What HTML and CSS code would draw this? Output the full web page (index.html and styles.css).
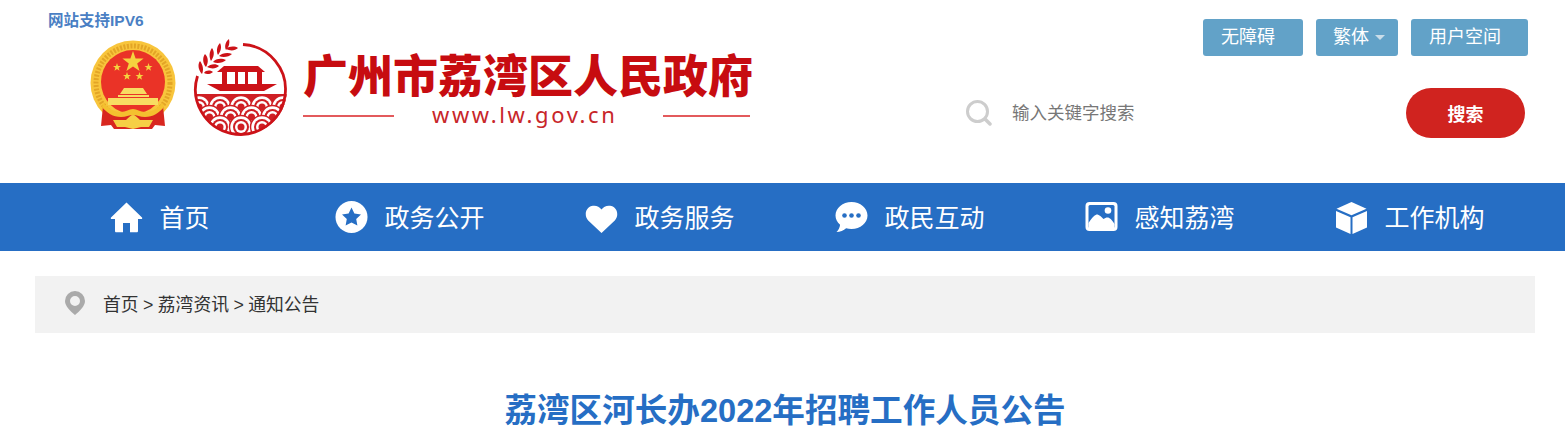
FILE: index.html
```html
<!DOCTYPE html>
<html lang="zh-CN">
<head>
  <meta charset="utf-8">
  <meta name="viewport" content="width=device-width, initial-scale=1">
  <title>荔湾区河长办2022年招聘工作人员公告</title>
  <link rel="stylesheet" href="styles.css">
</head>
<body>
  <div class="header">
    <div class="brand">
      <div class="ipv6">网站支持IPV6</div>
      <div class="logo">
        <svg class="emblem" viewBox="90 40 87 92" aria-hidden="true">
          <circle cx="133" cy="83" r="42.5" fill="#f8c53c"/>
          <circle cx="133" cy="83" r="37" fill="none" stroke="#e3a526" stroke-width="5" stroke-dasharray="2 1.500"/>
          <circle cx="133" cy="82" r="32" fill="#ea3327"/>
          <polygon points="133,51 135.600,58.600 143.600,58.600 137.200,63.400 139.600,71 133,66.400 126.400,71 128.800,63.400 122.400,58.600 130.400,58.600" fill="#f5d33f"/>
          <polygon points="117,63 118,66 121,66 118.600,67.800 119.500,70.800 117,69 114.500,70.800 115.400,67.800 113,66 116,66" fill="#f5d33f"/>
          <polygon points="148.500,63 149.500,66 152.500,66 150.100,67.800 151,70.800 148.500,69 146,70.800 146.900,67.800 144.500,66 147.500,66" fill="#f5d33f"/>
          <polygon points="127,72 128,75 131,75 128.600,76.800 129.500,79.800 127,78 124.500,79.800 125.400,76.800 123,75 126,75" fill="#f5d33f"/>
          <polygon points="139.500,72 140.500,75 143.500,75 141.100,76.800 142,79.800 139.500,78 137,79.800 137.900,76.800 135.500,75 138.500,75" fill="#f5d33f"/>
          <path d="M124 88h19l4 6h-27zM118 95h31v2h-31zM108 98h50v7h-50z" fill="#f8dc62"/>
          <path d="M103 106c5 3 10 9 17 9 5 0 8-3 13-3s8 3 13 3c7 0 12-6 17-9l2 20-10-1-3 4h-38l-3-4-10 1z" fill="#d8261f"/>
          <path d="M103 103c6 5 10 9 18 9 5 0 8-3 12-3s7 3 12 3c8 0 12-4 18-9l1 4c-5 6-11 10-19 10-5 0-8-2-12-2s-7 2-12 2c-8 0-14-4-19-10z" fill="#f4c02f"/>
          <path d="M113 120h13c3-3 5-5 7-5s4 2 7 5h13l-4 7h-8l-8 2-8-2h-8z" fill="#f6cf45"/>
        </svg>
        <svg class="seal" viewBox="193 37 96 98" aria-hidden="true">
          <defs>
            <clipPath id="sealClip"><circle cx="241.500" cy="88" r="45.500"/></clipPath>
            <g id="scallop">
              <circle r="11.500" fill="#fff" stroke="#cf1f24" stroke-width="1.500"/>
              <circle r="8" fill="#cf1f24"/>
              <circle r="6" fill="#fff"/>
              <circle r="3.500" fill="#cf1f24"/>
            </g>
          </defs>
          <g fill="#cc1218">
            <path d="M200 60c3 4 4 9 2 13-3-3-5-9-2-13zM205 53c3 3 4 8 1 13-3-3-4-9-1-13zM212 47c3 4 2 9-1 13-2-4-2-9 1-13zM220 42c2 4 1 8-2 12-2-4-1-9 2-12zM229 38c1 4 0 8-3 11-2-4 0-9 3-11z"/>
            <path d="M238 47c-3 3-8 3-12 1 3-3 9-3 12-1zM232 53c-3 3-9 4-13 2 3-3 9-4 13-2zM226 59c-3 3-9 4-13 2 3-4 9-4 13-2zM219 65c-3 3-8 3-12 1 3-3 9-4 12-1zM213 71c-2 2-6 3-9 1 2-3 6-3 9-1z"/>
            <path d="M217 71h48l-7-6h-34z"/>
            <path d="M222 70h5v13h-5zM235 70h3v13h-3zM245 70h3v13h-3zM257 70h5v13h-5z"/>
            <path d="M207 83h70l-13 7h-44z"/>
          </g>
          <g clip-path="url(#sealClip)">
            <rect x="195" y="93" width="94" height="44" fill="#cf1f24"/>
            <use href="#scallop" x="199" y="106"/>
            <use href="#scallop" x="220" y="106"/>
            <use href="#scallop" x="241" y="106"/>
            <use href="#scallop" x="262" y="106"/>
            <use href="#scallop" x="283" y="106"/>
            <use href="#scallop" x="209.500" y="116"/>
            <use href="#scallop" x="230.500" y="116"/>
            <use href="#scallop" x="251.500" y="116"/>
            <use href="#scallop" x="272.500" y="116"/>
            <use href="#scallop" x="220" y="126"/>
            <use href="#scallop" x="241" y="126"/>
            <use href="#scallop" x="262" y="126"/>
          </g>
          <path d="M243 43.500A45 45 0 1 1 197.500 75" fill="none" stroke="#cc1218" stroke-width="2.800"/>
        </svg>
        <div class="logo-text">
          <div class="logo-name">广州市荔湾区人民政府</div>
          <div class="logo-url"><span class="logo-line"></span><span class="logo-site">www.lw.gov.cn</span><span class="logo-line logo-line-end"></span></div>
        </div>
      </div>
    </div>
    <div class="header-right">
      <div class="tools">
        <a class="tool tool-wide">无障碍</a>
        <a class="tool tool-lang">繁体<span class="caret"></span></a>
        <a class="tool tool-user">用户空间</a>
      </div>
      <div class="search">
        <svg class="search-icon" viewBox="0 0 26 26" aria-hidden="true">
          <circle cx="11.500" cy="11.500" r="10" fill="none" stroke="#cdcdcd" stroke-width="3"/>
          <path d="M19 19l5 5" stroke="#cdcdcd" stroke-width="3.500" stroke-linecap="round"/>
        </svg>
        <input class="search-input" type="text" placeholder="输入关键字搜索">
        <button class="search-btn">搜索</button>
      </div>
    </div>
  </div>

  <div class="nav">
    <div class="nav-inner">
      <a class="nav-item">
        <svg viewBox="0 0 33 34" aria-hidden="true"><path fill="#fff" d="M16.500 2.500 32 17.500c.6.800.1 1.500-.8 1.500H28v12c0 .800-.5 1.300-1.300 1.300H20V23h-7v9.300H6.300c-.8 0-1.300-.5-1.300-1.300V19H1.800c-.9 0-1.400-.7-.8-1.500z"/></svg>
        <span>首页</span>
      </a>
      <a class="nav-item">
        <svg viewBox="0 0 33 34" aria-hidden="true"><circle cx="16.500" cy="17" r="16" fill="#fff"/><path fill="#266ec4" d="M16.500 7.500l2.900 6 6.600.9-4.800 4.600 1.200 6.500-5.900-3.100-5.900 3.100 1.200-6.500L7 14.400l6.600-.9z"/></svg>
        <span>政务公开</span>
      </a>
      <a class="nav-item">
        <svg viewBox="0 0 33 34" aria-hidden="true"><path fill="#fff" d="M16.500 33 3.200 20.500C-1 16.200.3 8 6.500 6.100c3.900-1.200 7.700.2 10 3.400 2.300-3.200 6.100-4.600 10-3.400 6.200 1.900 7.500 10.100 3.300 14.400z"/></svg>
        <span>政务服务</span>
      </a>
      <a class="nav-item">
        <svg viewBox="0 0 33 34" aria-hidden="true"><path fill="#fff" d="M16.500 2C25.300 2 32.500 8 32.500 15.500S25.300 29 16.500 29c-1.900 0-3.700-.3-5.400-.8C8.800 30.500 5 32 1.500 32c2-2 3.300-4.500 3.600-7.300C2.200 22.200.5 19 .5 15.500.5 8 7.700 2 16.500 2z"/><g fill="#266ec4"><circle cx="9.500" cy="15.500" r="2.300"/><circle cx="16.500" cy="15.500" r="2.300"/><circle cx="23.500" cy="15.500" r="2.300"/></g></svg>
        <span>政民互动</span>
      </a>
      <a class="nav-item">
        <svg viewBox="0 0 33 34" aria-hidden="true"><rect x=".5" y="2" width="32" height="29" rx="4" fill="#fff"/><rect x="3.500" y="5" width="26" height="23" rx="1.500" fill="#266ec4"/><circle cx="23" cy="10.500" r="3.300" fill="#fff"/><path fill="#fff" d="M3.500 28v-5c2.500-4 5-7.500 8-8.500 3 0 5 2.800 7 4.500 1.500-1 3-1.800 4.500-1.500 2.500.5 5 4 6.500 6.500V28z"/></svg>
        <span>感知荔湾</span>
      </a>
      <a class="nav-item">
        <svg viewBox="0 0 33 34" aria-hidden="true"><path fill="#fff" d="M16.500 2 31.500 8.800 16.500 15.200 1.500 8.800z"/><path fill="#fff" d="M1 11 15.500 17.300V34L1 27.500zM32 11 17.500 17.300V34L32 27.500z"/></svg>
        <span>工作机构</span>
      </a>
    </div>
  </div>

  <div class="breadcrumb">
    <svg class="pin" viewBox="0 0 20 24" aria-hidden="true"><path fill="#aaa" fill-rule="evenodd" d="M10 0a10 10 0 0 1 10 10c0 5-5.500 10.500-10 14C5.500 20.500 0 15 0 10A10 10 0 0 1 10 0zm0 5a5 5 0 1 0 0 10 5 5 0 0 0 0-10z"/></svg>
    <span>首页 &gt; 荔湾资讯 &gt; 通知公告</span>
  </div>

  <h1 class="article-title">荔湾区河长办2022年招聘工作人员公告</h1>
</body>
</html>
```

FILE: styles.css
```css
* {
  box-sizing: border-box;
}

body {
  font-family: "Liberation Sans", "Noto Sans CJK SC", sans-serif;
  margin: 0;
  background: white;
  color: #333;
  overflow: hidden;
}

.header {
  height: 183px;
  display: flex;
  justify-content: space-between;
}

.brand {
  padding: 12px 0 0 48px;
}

.ipv6 {
  font-size: 15.5px;
  font-weight: 700;
  line-height: 18px;
  color: #4a7fc4;
}

.logo {
  display: flex;
  align-items: flex-start;
  margin: 8px 0 0 42px;
}

.emblem {
  width: 87px;
  height: 92px;
  margin-top: 2px;
}

.seal {
  width: 96px;
  height: 98px;
  margin-left: 16px;
}

.logo-text {
  width: 449px;
  margin: 11px 0 0 14px;
}

.logo-name {
  font-family: "Noto Sans CJK SC", sans-serif;
  font-size: 45px;
  font-weight: 900;
  line-height: 50px;
  color: #c70c10;
  white-space: nowrap;
}

.logo-url {
  display: flex;
  align-items: center;
  margin-top: 2px;
}

.logo-site {
  margin-left: 38px;
  padding-bottom: 3px;
  font-family: "Noto Sans", sans-serif;
  font-size: 22px;
  line-height: 26px;
  letter-spacing: 2.6px;
  color: #c8262a;
}

.logo-line {
  width: 91px;
  height: 2px;
  background: #e35a5c;
}

.logo-line-end {
  width: 87px;
  margin: 0 2px 0 auto;
}

.header-right {
  width: 562px;
  margin-right: 37px;
  padding-top: 19px;
}

.tools {
  display: flex;
  justify-content: flex-end;
  gap: 13px;
}

.tool {
  height: 37px;
  display: flex;
  align-items: center;
  justify-content: center;
  padding-bottom: 5px;
  background: #62a2c8;
  border-radius: 3px;
  color: white;
  font-size: 18px;
}

.tool-wide {
  width: 100px;
  padding-right: 10px;
}

.tool-lang {
  width: 82px;
  padding-left: 4px;
}

.tool-user {
  width: 117px;
  padding-right: 9px;
}

.caret {
  width: 0;
  height: 0;
  margin: 5px 0 0 6px;
  border: 5px solid transparent;
  border-top: 5px solid #c9dde9;
  border-bottom: none;
}

.search {
  display: flex;
  align-items: center;
  margin: 32px 3px 0 0;
}

.search-icon {
  width: 26px;
  height: 26px;
  flex-shrink: 0;
}

.search-input {
  flex: 1;
  min-width: 0;
  margin-left: 20px;
  border: none;
  outline: none;
  padding: 0;
  background: none;
  font-family: inherit;
  font-size: 17.5px;
}

.search-input::placeholder {
  color: #777;
}

.search-btn {
  width: 119px;
  height: 50px;
  border: none;
  border-radius: 25px;
  background: #d0231f;
  color: white;
  font-family: inherit;
  font-size: 18px;
  font-weight: 700;
  cursor: pointer;
}

.nav {
  height: 68px;
  background: #266ec4;
}

.nav-inner {
  width: 1500px;
  height: 100%;
  margin-left: 35px;
  display: grid;
  grid-template-columns: repeat(6, 1fr);
}

.nav-item {
  display: flex;
  align-items: center;
  justify-content: center;
  gap: 16px;
  color: white;
  font-size: 25px;
  cursor: pointer;
}

.nav-item span {
  padding-bottom: 2px;
}

.nav-item svg {
  width: 33px;
  height: 34px;
  flex-shrink: 0;
}

.breadcrumb {
  width: 1500px;
  height: 57px;
  margin: 25px 0 0 35px;
  padding: 0 0 4px 30px;
  display: flex;
  align-items: center;
  gap: 18px;
  background: #f2f2f2;
  font-size: 17.8px;
  word-spacing: -0.5px;
  color: #333;
}

.pin {
  width: 20px;
  height: 24px;
  flex-shrink: 0;
}

.article-title {
  margin: 56px 0 0;
  padding-left: 5px;
  text-align: center;
  font-size: 32.6px;
  font-weight: 700;
  line-height: 44px;
  color: #266ec4;
}
```
